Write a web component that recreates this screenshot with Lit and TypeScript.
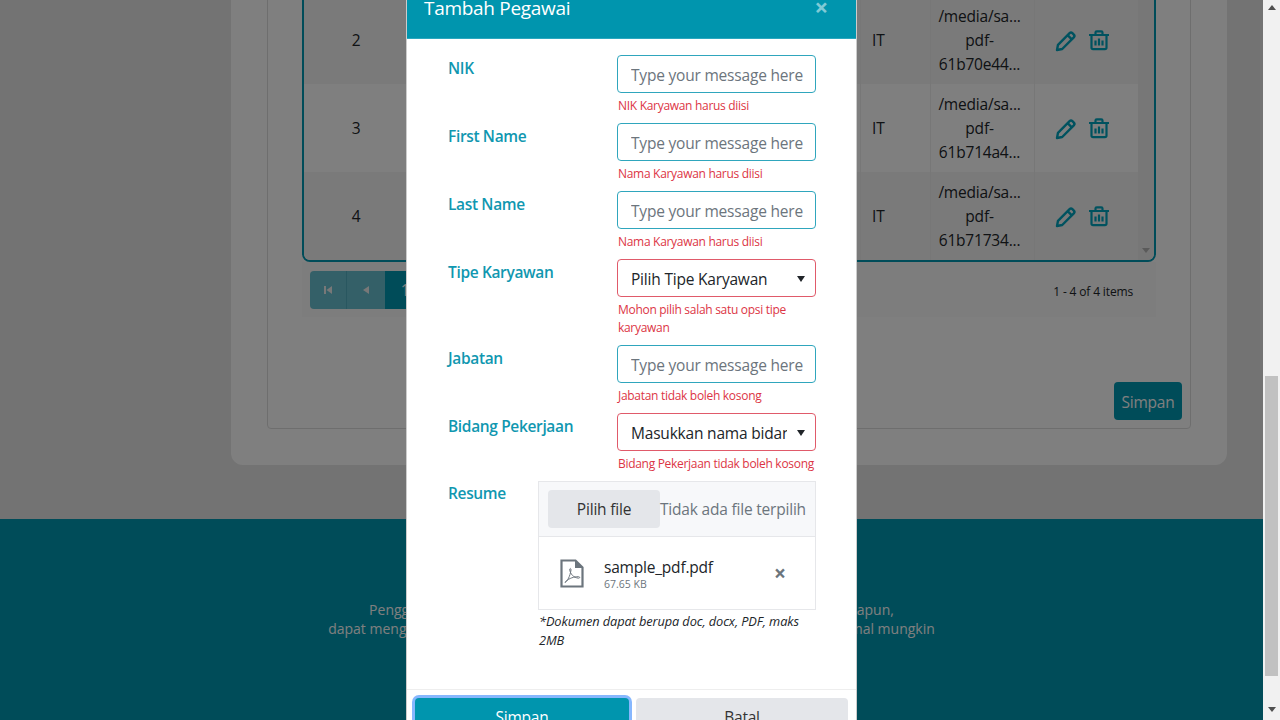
import { LitElement, html, css, svg } from 'lit';
import { customElement } from 'lit/decorators.js';

const rows = [
  { no: 2, file: '61b70e44...' },
  { no: 3, file: '61b714a4...' },
  { no: 4, file: '61b71734...' },
];

const pencil = svg`<path d="M2 20l1-5.200L14.600 3.200a2 2 0 0 1 2.800 0l1.400 1.400a2 2 0 0 1 0 2.800L7.200 19z M12.600 5.200l4.200 4.200" fill="none" stroke="currentColor" stroke-width="2.400" stroke-linejoin="round"/>`;
const trash = svg`<path d="M0 5h20 M6.500 4.500V2.600a1.200 1.200 0 0 1 1.200-1.200h4.600a1.200 1.200 0 0 1 1.200 1.200v1.900 M2.500 5v12.600a1.600 1.600 0 0 0 1.600 1.600h11.800a1.600 1.600 0 0 0 1.600-1.600V5" fill="none" stroke="currentColor" stroke-width="2.200"/><path d="M6.500 10.500v5 M10 8.500v7 M13.500 10.500v5" fill="none" stroke="currentColor" stroke-width="2.200"/>`;
const pdf = svg`<path d="M1.500 1.500h14l7 7v19h-21z" fill="none" stroke="currentColor" stroke-width="2.200"/><path d="M15 1.500v7.500h7.500" fill="currentColor"/><path d="M5 23.500c2.500-1.500 5-6 6-12.500c0-2-1.500-2-1.200 0c.6 4 3.500 7.500 8.700 8.200c1.600 0 1.600-1.500 0-1.500c-4.500 0-9 1.300-13 5z" fill="none" stroke="currentColor" stroke-width="1"/>`;

@customElement('app-root')
export class AppRoot extends LitElement {
  static styles = css`
    :host {
      display: flex;
      width: 1280px;
      height: 720px;
      overflow: hidden;
      font-family: 'Open Sans', 'Noto Sans', sans-serif;
      font-size: 15.500px;
      letter-spacing: -0.200px;
      line-height: 24px;
      color: #212529;
    }
    * { box-sizing: border-box; }

    .main {
      position: relative;
      width: 1263px;
      height: 720px;
      overflow: hidden;
      background: #e6e6e6;
    }

    .card {
      margin: -61px 36px 54px 231px;
      padding: 20px 36px 36px;
      background: #fff;
      border-radius: 0 0 12px 12px;
    }
    .inner {
      display: flex;
      flex-direction: column;
      padding: 34px 8px 8px;
      border: 1px solid #ddd;
      border-radius: 4px;
    }
    .table {
      display: flex;
      margin: 0 26px;
      border: 2px solid #0098b2;
      border-radius: 0 0 8px 8px;
      overflow: hidden;
    }
    .rows { flex: 1; }
    .row {
      display: grid;
      grid-template-columns: 104px 452px 70px 104px 104px;
      height: 88px;
      background: #f4f4f4;
    }
    .row.alt { background: #fff; }
    .cell {
      display: flex;
      align-items: center;
      padding: 0 8px;
      border-left: 1px solid #eee;
    }
    .cell:first-child { border-left: 0; }
    .no { justify-content: center; }
    .it { padding-left: 11px; }
    .path { flex-direction: column; justify-content: center; padding-right: 14px; text-align: center; white-space: nowrap; }
    .actions { gap: 12px; padding: 1px 0 0 20px; color: #00a5bf; }
    .actions svg { display: block; }
    .track {
      display: flex;
      justify-content: center;
      align-items: flex-end;
      width: 17px;
      padding-bottom: 7px;
      background: #efefef;
    }
    .track i {
      border: 4px solid transparent;
      border-top: 5px solid #b5b5b5;
      border-bottom: 0;
    }

    .pager {
      display: flex;
      align-items: center;
      justify-content: space-between;
      height: 55px;
      margin: 0 26px;
      padding: 0 23px 0 8px;
      background: #fafafa;
    }
    .pages { display: flex; height: 38px; }
    .pages div {
      display: flex;
      align-items: center;
      justify-content: center;
      width: 37px;
      background: #68c0d0;
      border-right: 1px solid #52afc0;
      color: #f0f0f0;
    }
    .pages div:first-child { border-radius: 4px 0 0 4px; }
    .pages div:nth-child(2) { width: 38px; border-right: 0; }
    .pages .active { width: 40px; background: #0098b2; border: 0; color: #fff; }
    .count { margin-top: 4px; font-size: 12px; line-height: 18px; letter-spacing: -0.150px; }

    .save {
      align-self: flex-end;
      width: 68px;
      height: 38px;
      margin-top: 65px;
      border-radius: 4px;
      background: #0098b2;
      color: #fff;
      text-align: center;
      line-height: 40px;
    }

    .footer {
      height: 202px;
      padding-top: 81px;
      background: #0098b2;
      color: #fff;
      text-align: center;
      font-size: 14px;
      letter-spacing: 0;
      line-height: 19px;
    }

    .overlay {
      position: absolute;
      inset: 0;
      background: rgba(0, 0, 0, 0.5);
    }
    .modal {
      position: absolute;
      left: 406px;
      top: -24px;
      width: 451px;
      background: #fff;
      border: 1px solid rgba(0, 0, 0, 0.2);
    }
    .head {
      display: flex;
      justify-content: space-between;
      height: 62px;
      padding: 16px 28px 0 17px;
      background: #0095ae;
      border-bottom: 1px solid #2aa7bf;
      color: #fff;
      font-size: 19px;
      letter-spacing: -0.300px;
      line-height: 30px;
    }
    .close {
      font-size: 24px;
      line-height: 28px;
      font-weight: 700;
      opacity: 0.5;
    }
    .body { padding: 16px 40px 0; }
    .field { display: flex; }
    .label {
      flex: none;
      width: 170px;
      padding: 1px 0 0 1px;
      color: #1097b0;
      font-weight: 600;
      letter-spacing: -0.350px;
    }
    .resume { width: 91px; padding-top: 0; }
    .value { flex: 1; min-width: 0; padding-bottom: 7.600px; }
    input, .select {
      display: flex;
      align-items: center;
      width: 100%;
      height: 38px;
      padding: 2px 10px 0 13px;
      background: #fff;
      border: 1px solid #2fa6bd;
      border-radius: 4px;
      outline: 0;
      font: inherit;
      letter-spacing: inherit;
      color: #212529;
    }
    input::placeholder { color: #6c757d; opacity: 1; }
    .select { border-color: #e05a6a; }
    .select span { flex: 1; overflow: hidden; white-space: nowrap; }
    .select i {
      flex: none;
      margin-left: 10px;
      border: 4px solid transparent;
      border-top: 6px solid #212529;
      border-bottom: 0;
    }
    .error {
      margin: 4px 0 0 1px;
      color: #dc3545;
      font-size: 12px;
      letter-spacing: -0.300px;
      line-height: 18.400px;
    }

    .files { border: 1px solid #e6e7ea; }
    .picker {
      display: flex;
      align-items: center;
      height: 55px;
      padding-left: 9px;
      background: #f7f8fa;
      border-bottom: 1px solid #e6e7ea;
      white-space: nowrap;
    }
    .picker b {
      width: 112px;
      height: 38px;
      background: #e4e6ea;
      border-radius: 4px;
      font-weight: 400;
      line-height: 38px;
      text-align: center;
      color: #333;
    }
    .picker span { color: #6c757d; }
    .file {
      display: flex;
      align-items: center;
      height: 72px;
      padding-left: 21px;
    }
    .file svg { flex: none; margin-right: 20px; color: #6c757d; }
    .name { flex: 1; }
    .name small {
      display: block;
      margin-top: -2px;
      font-size: 10.500px;
      letter-spacing: 0;
      line-height: 14px;
      color: #6c757d;
    }
    .remove {
      width: 41px;
      color: #6c757d;
      font-size: 21px;
      font-weight: 700;
    }
    .hint {
      margin: 2px 0 0 1px;
      font-size: 12.800px;
      font-style: italic;
      letter-spacing: -0.100px;
      line-height: 19px;
    }

    .foot {
      display: grid;
      grid-template-columns: 214px 212px;
      gap: 7px;
      margin-top: 39px;
      padding: 8px;
      border-top: 1px solid #eee;
    }
    .foot div {
      height: 38px;
      border-radius: 4px;
      text-align: center;
      line-height: 38px;
    }
    .ok { background: #0095ae; color: #fff; box-shadow: 0 0 0 3px #86b7fe; }
    .cancel { background: #e4e6ea; color: #333; }

    .bar {
      display: flex;
      flex-direction: column;
      align-items: center;
      width: 17px;
      height: 720px;
      background: #f1f1f1;
    }
    .bar .thumb { width: 13px; height: 300px; margin: 366px 0 31px; background: #c1c1c1; }
    .bar .up, .bar .down { border: 4px solid transparent; }
    .bar .up { margin-top: 5px; border-top: 0; border-bottom: 5px solid #505050; }
    .bar .down { border-bottom: 0; border-top: 5px solid #505050; }
  `;

  field(label: string, control: unknown, errors: string) {
    return html`
      <div class="field">
        <div class="label">${label}</div>
        <div class="value">${control}<div class="error">${errors}</div></div>
      </div>`;
  }

  input() {
    return html`<input placeholder="Type your message here" />`;
  }

  select(text: string) {
    return html`<div class="select"><span>${text}</span><i></i></div>`;
  }

  renderPage() {
    return html`
      <div class="card">
        <div class="inner">
          <div class="table">
            <div class="rows">
              ${rows.map((r, i) => html`
                <div class="row ${i === 1 ? 'alt' : ''}">
                  <div class="cell no">${r.no}</div>
                  <div class="cell"></div>
                  <div class="cell it">IT</div>
                  <div class="cell path"><span>/media/sa...</span><span>pdf-</span><span>${r.file}</span></div>
                  <div class="cell actions">
                    <svg width="22" height="22" viewBox="0 0 22 22">${pencil}</svg>
                    <svg width="20" height="21" viewBox="0 0 20 21">${trash}</svg>
                  </div>
                </div>`)}
            </div>
            <div class="track"><i></i></div>
          </div>
          <div class="pager">
            <div class="pages">
              <div><svg width="10" height="10" viewBox="0 0 10 10"><path d="M1 1h2v8H1z M9 1v8L3.500 5z" fill="currentColor"/></svg></div>
              <div><svg width="10" height="10" viewBox="0 0 10 10"><path d="M8 1v8L2 5z" fill="currentColor"/></svg></div>
              <div class="active">1</div>
            </div>
            <div class="count">1 - 4 of 4 items</div>
          </div>
          <div class="save">Simpan</div>
        </div>
      </div>
      <div class="footer">
        Penggunaan dapat mengakses layanan kapan saja lewat satu perangkat apapun,<br />
        dapat mengelola data karyawan dengan mudah agar perusahaan bekerja seoptimal mungkin
      </div>`;
  }

  renderModal() {
    return html`
      <div class="modal">
        <div class="head"><span>Tambah Pegawai</span><span class="close">×</span></div>
        <div class="body">
          ${this.field('NIK', this.input(), 'NIK Karyawan harus diisi')}
          ${this.field('First Name', this.input(), 'Nama Karyawan harus diisi')}
          ${this.field('Last Name', this.input(), 'Nama Karyawan harus diisi')}
          ${this.field('Tipe Karyawan', this.select('Pilih Tipe Karyawan'), 'Mohon pilih salah satu opsi tipe karyawan')}
          ${this.field('Jabatan', this.input(), 'Jabatan tidak boleh kosong')}
          ${this.field('Bidang Pekerjaan', this.select('Masukkan nama bidang pekerjaan'), 'Bidang Pekerjaan tidak boleh kosong')}
          <div class="field">
            <div class="label resume">Resume</div>
            <div>
              <div class="files">
                <div class="picker"><b>Pilih file</b><span>Tidak ada file terpilih</span></div>
                <div class="file">
                  <svg width="24" height="29" viewBox="0 0 24 29">${pdf}</svg>
                  <div class="name">sample_pdf.pdf<small>67.65 KB</small></div>
                  <div class="remove">×</div>
                </div>
              </div>
              <div class="hint">*Dokumen dapat berupa doc, docx, PDF, maks 2MB</div>
            </div>
          </div>
        </div>
        <div class="foot">
          <div class="ok">Simpan</div>
          <div class="cancel">Batal</div>
        </div>
      </div>`;
  }

  render() {
    return html`
      <div class="main">
        ${this.renderPage()}
        <div class="overlay">${this.renderModal()}</div>
      </div>
      <div class="bar"><i class="up"></i><div class="thumb"></div><i class="down"></i></div>
    `;
  }
}
